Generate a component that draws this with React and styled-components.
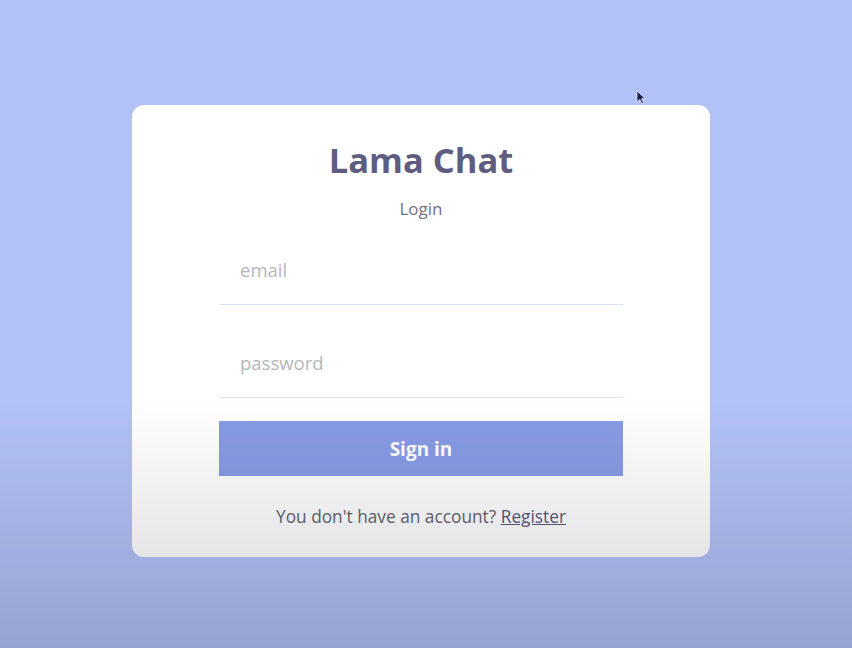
import React from "react";
import styled, { createGlobalStyle } from "styled-components";

const GlobalStyle = createGlobalStyle`
  * { box-sizing: border-box; }
  html, body { margin: 0; padding: 0; }
  body {
    font-family: "Open Sans", "Noto Sans", sans-serif;
    background: #b3c2f6;
  }
  body::after {
    content: "";
    position: fixed;
    inset: 0;
    pointer-events: none;
    background: linear-gradient(
      to bottom,
      rgba(10, 12, 30, 0) 0,
      rgba(10, 12, 30, 0) 400px,
      rgba(10, 12, 30, 0.17) 100%
    );
  }
`;

const Page = styled.div`
  position: relative;
  height: 100vh;
  padding: 14px 10px 0 0;
  display: flex;
  align-items: center;
  justify-content: center;
`;

const Card = styled.div`
  width: 578px;
  background: #ffffff;
  border-radius: 12px;
  padding: 33px 0 30px;
  display: flex;
  flex-direction: column;
  align-items: center;
`;

const Title = styled.h1`
  margin: 0;
  font-size: 34.5px;
  line-height: 44px;
  font-weight: 700;
  color: #5e5d80;
`;

const Subtitle = styled.div`
  margin-top: 17px;
  font-size: 17px;
  line-height: 20px;
  color: #727280;
`;

const Form = styled.form`
  margin-top: 16px;
  width: 404px;
  display: flex;
  flex-direction: column;
  gap: 23px;
`;

const Input = styled.input`
  height: 70px;
  padding: 0 21px;
  border: none;
  border-bottom: 1px solid #dde1f5;
  font-family: inherit;
  font-size: 18.5px;
  color: #5d5b8d;
  outline: none;
  background: transparent;
  &::placeholder { color: #b6b6bc; }
`;

const Button = styled.button`
  height: 55px;
  border: none;
  background: #889ce6;
  color: #ffffff;
  font-family: inherit;
  font-weight: 700;
  font-size: 19px;
  cursor: pointer;
`;

const Footer = styled.p`
  margin: 31px 0 0;
  font-size: 17.3px;
  line-height: 20px;
  color: #64646e;
`;

const Link = styled.a`
  color: #5a5878;
  text-decoration: underline;
`;

const Cursor = styled.svg`
  position: absolute;
  left: 636px;
  top: 90px;
  width: 10px;
  height: 15px;
`;

export default function App() {
  return (
    <>
      <GlobalStyle />
      <Page>
        <Card>
          <Title>Lama Chat</Title>
          <Subtitle>Login</Subtitle>
          <Form onSubmit={(e) => e.preventDefault()}>
            <Input type="email" placeholder="email" />
            <Input type="password" placeholder="password" />
            <Button type="submit">Sign in</Button>
          </Form>
          <Footer>
            You don't have an account? <Link href="#">Register</Link>
          </Footer>
        </Card>
        <Cursor viewBox="0 0 10 15">
          <path d="M1 1 L1 12 L3.8 9.4 L5.8 13.8 L7.4 13 L5.5 8.8 L9 8.6 Z" fill="#1d2350" stroke="#ffffff" strokeWidth="0.6" />
        </Cursor>
      </Page>
    </>
  );
}
